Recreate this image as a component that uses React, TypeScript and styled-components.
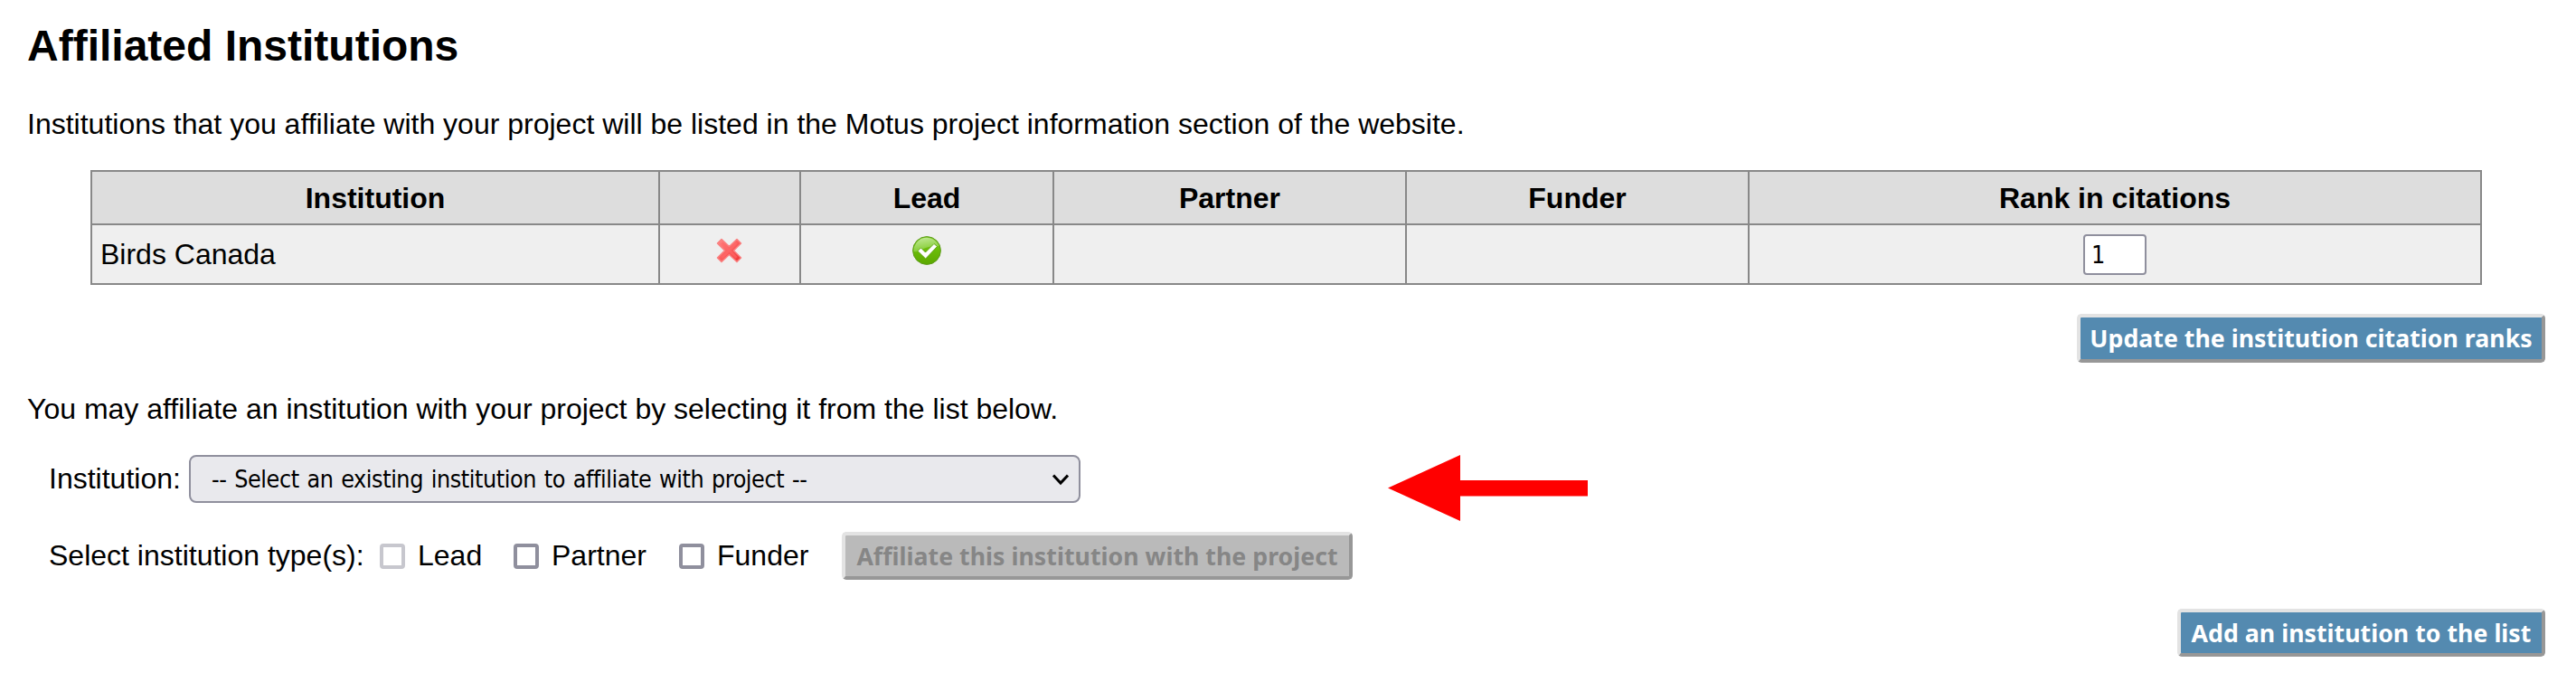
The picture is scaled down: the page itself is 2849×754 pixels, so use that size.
import React from "react";
import styled, { createGlobalStyle } from "styled-components";

const Global = createGlobalStyle`
  * { box-sizing: border-box; }
  body { margin: 0; background: #fff; color: #000; font: 32px/36px "Liberation Sans", Arial, sans-serif; }
`;
const controlFont = `"DejaVu Sans Condensed", "DejaVu Sans", Tahoma, sans-serif`;

const Page = styled.main`
  width: 2849px; height: 754px; padding: 23px 34px 0 30px; overflow: hidden;
`;
const Title = styled.h1`
  margin: 0; font-size: 48px; line-height: 55px; font-weight: 700;
`;
const Intro = styled.p<{ $top: number }>`
  margin: ${(p) => p.$top}px 0 0; white-space: nowrap;
`;
const Table = styled.table`
  width: 2645px; margin: 33px 0 0 70px; border-collapse: collapse; table-layout: fixed;
`;
const Th = styled.th`
  height: 59px; padding: 0 8px; border: 2px solid #888; background: #ddd; font-weight: 700;
`;
const Td = styled.td<{ $center?: boolean }>`
  height: 66px; padding: 0 9px; border: 2px solid #888; background: #efefef;
  text-align: ${(p) => (p.$center ? "center" : "left")};
`;
const IconHolder = styled.span`
  display: flex; justify-content: center; height: 41px;
`;
const RankInput = styled.input`
  display: block; width: 70px; height: 45px; margin: 0 auto; padding: 0 7px;
  border: 2px solid #8f8f9d; border-radius: 4px; background: #fff; color: #000;
  font: 26.67px ${controlFont};
`;
const Actions = styled.div<{ $top: number }>`
  display: flex; justify-content: flex-end; margin-top: ${(p) => p.$top}px;
`;
const Button = styled.button<{ $width: number; $height?: number }>`
  width: ${(p) => p.$width}px; height: ${(p) => p.$height ?? 53}px; padding: 0;
  border: 4px solid; border-color: #e3e3e3 #979797 #979797 #e3e3e3; border-radius: 5px;
  background: #548ab0; color: #fff; white-space: nowrap;
  font: bold 26.67px/32px "Noto Sans", Tahoma, sans-serif;
  letter-spacing: 0.04px;
  &:disabled { background: #bababa; color: #868686; }
`;
const FormRow = styled.div<{ $top: number }>`
  display: flex; align-items: center; height: 53px; margin: ${(p) => p.$top}px 0 0 24px;
`;
const Caption = styled.span<{ $width?: number }>`
  width: ${(p) => (p.$width ? `${p.$width}px` : "auto")}; padding-bottom: 2px; white-space: nowrap;
`;
const SelectBox = styled.div`
  display: flex; align-items: center; justify-content: space-between;
  width: 986px; height: 53px; padding: 0 11px 0 23px;
  border: 2px solid #8f8f9d; border-radius: 8px; background: #e9e9ed;
  font: 26.67px/32px ${controlFont}; white-space: nowrap;
  letter-spacing: -0.43px; word-spacing: 1.6px;
`;
const ArrowHolder = styled.div`
  align-self: flex-start; height: 73px; margin-left: 340px;
`;
const Option = styled.label<{ $width: number }>`
  display: flex; align-items: center; gap: 14px; width: ${(p) => p.$width}px;
`;
const Checkbox = styled.input`
  appearance: none; flex: none; width: 28px; height: 28px; margin: 0;
  border: 4px solid #8f8f9d; border-radius: 4px; background: #fff;
  &:disabled { border-color: #c7c7ce; }
`;

const columns = [
  { name: "Institution", width: 628 },
  { name: "", width: 156 },
  { name: "Lead", width: 280 },
  { name: "Partner", width: 390 },
  { name: "Funder", width: 379 },
  { name: "Rank in citations", width: 810 },
];

const DeleteIcon = () => (
  <svg width="32" height="32" viewBox="0 0 32 32">
    <defs>
      <linearGradient id="cross" x1="0" y1="0" x2="1" y2="1">
        <stop offset="0" stopColor="#ff8a8a" />
        <stop offset=".5" stopColor="#fb5e5e" />
        <stop offset="1" stopColor="#ee3030" />
      </linearGradient>
    </defs>
    <path d="M7 3.500 15.500 11.500 24 3.500 28.500 8 20.500 16 28.500 24 24 28.500 15.500 20.500 7 28.500 2.500 24 10.500 16 2.500 8Z" fill="url(#cross)" stroke="#f98080" strokeWidth="1.500" strokeLinejoin="round" />
    <path d="M7.500 7.500 23.500 24M23.500 7.500 7.500 24" stroke="#ff6b6b" strokeWidth="3" opacity=".6" />
  </svg>
);

const CheckIcon = () => (
  <svg width="32" height="32" viewBox="0 0 32 32">
    <defs>
      <linearGradient id="disc" x1="0" y1="0" x2="0" y2="1">
        <stop offset="0" stopColor="#7fca27" />
        <stop offset=".5" stopColor="#6abb08" />
        <stop offset="1" stopColor="#5ca800" />
      </linearGradient>
      <linearGradient id="shine" x1="0" y1="0" x2=".3" y2="1">
        <stop offset="0" stopColor="#c5ea9c" />
        <stop offset="1" stopColor="#82cc30" />
      </linearGradient>
    </defs>
    <circle cx="16" cy="16" r="15.400" fill="url(#disc)" stroke="#5d9b1b" strokeWidth="1" />
    <path d="M1.500 17A14.500 14.500 0 0 1 29.500 11C22 11 16 12 11 14.500C7 16.500 4 18 1.500 17Z" fill="url(#shine)" />
    <path d="M6 16.500 9.500 13 14.500 18 24 8.500 27.500 11.500 14.700 25Z" fill="#fff" stroke="#559c08" strokeWidth=".8" />
  </svg>
);

export default function App() {
  return (
    <>
      <Global />
      <Page>
        <Title>Affiliated Institutions</Title>
        <Intro $top={41}>
          Institutions that you affiliate with your project will be listed in the Motus project information section of the website.
        </Intro>
        <Table>
          <colgroup>
            {columns.map((c, i) => <col key={i} width={c.width} />)}
          </colgroup>
          <thead>
            <tr>{columns.map((c, i) => <Th key={i}>{c.name}</Th>)}</tr>
          </thead>
          <tbody>
            <tr>
              <Td>Birds Canada</Td>
              <Td><IconHolder><DeleteIcon /></IconHolder></Td>
              <Td><IconHolder><CheckIcon /></IconHolder></Td>
              <Td />
              <Td />
              <Td $center><RankInput defaultValue="1" /></Td>
            </tr>
          </tbody>
        </Table>
        <Actions $top={32}>
          <Button $width={518} $height={54}>Update the institution citation ranks</Button>
        </Actions>
        <Intro $top={33}>You may affiliate an institution with your project by selecting it from the list below.</Intro>
        <FormRow $top={33}>
          <Caption $width={155}>Institution:</Caption>
          <SelectBox>
            <span>-- Select an existing institution to affiliate with project --</span>
            <svg width="20" height="14" viewBox="0 0 20 14" fill="none" stroke="#000" strokeWidth="3">
              <path d="M3 2.500 11 11 19 2.500" />
            </svg>
          </SelectBox>
          <ArrowHolder>
            <svg width="222" height="73" viewBox="0 0 222 73">
              <path d="M0 36.500 80 0V28H221V45.500H80V73Z" fill="#f00" />
            </svg>
          </ArrowHolder>
        </FormRow>
        <FormRow $top={32}>
          <Caption $width={366}>Select institution type(s):</Caption>
          <Option $width={148}><Checkbox type="checkbox" disabled /><Caption>Lead</Caption></Option>
          <Option $width={183}><Checkbox type="checkbox" /><Caption>Partner</Caption></Option>
          <Option $width={180}><Checkbox type="checkbox" /><Caption>Funder</Caption></Option>
          <Button $width={565} disabled>Affiliate this institution with the project</Button>
        </FormRow>
        <Actions $top={32}>
          <Button $width={407}>Add an institution to the list</Button>
        </Actions>
      </Page>
    </>
  );
}
